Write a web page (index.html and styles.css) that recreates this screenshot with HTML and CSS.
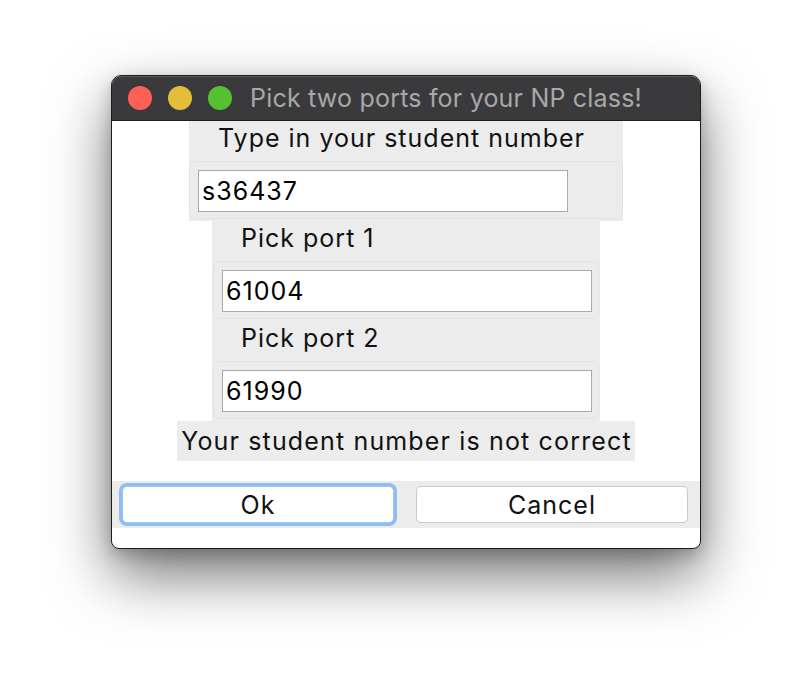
FILE: index.html
```html
<!DOCTYPE html>
<html>
<head>
<meta charset="utf-8">
<link rel="stylesheet" href="styles.css">
</head>
<body>
<div class="window">
  <div class="titlebar">
    <div class="lights">
      <span class="light red"></span>
      <span class="light yellow"></span>
      <span class="light green"></span>
    </div>
    <div class="title">Pick two ports for your NP class!</div>
  </div>
  <div class="content">
    <div class="frame frame-student">
      <div class="label">Type in your student number</div>
      <div class="group group-student"><div class="field">s36437</div></div>
    </div>
    <div class="frame frame-ports">
      <div class="label">Pick port 1</div>
      <div class="group"><div class="field">61004</div></div>
      <div class="label label-second">Pick port 2</div>
      <div class="group"><div class="field">61990</div></div>
    </div>
    <div class="error">Your student number is not correct</div>
    <div class="buttons">
      <div class="btn-wrap focus"><div class="btn">Ok</div></div>
      <div class="btn-wrap"><div class="btn">Cancel</div></div>
    </div>
  </div>
</div>
</body>
</html>
```
FILE: styles.css
```css
html, body {
  margin: 0;
  padding: 0;
  background: #ffffff;
}
html {
  height: 100%;
}
body {
  min-height: 100%;
  box-sizing: border-box;
  padding: 75px 0 0 111px;
  font-family: Inter, "Liberation Sans", sans-serif;
  font-size: 25px;
  letter-spacing: 1px;
  color: #111;
}
.window {
  width: 588px;
  border: 1px solid #1c1c1c;
  border-radius: 10px 10px 8px 8px;
  background: #fff;
  box-shadow: 0 26px 60px rgba(0,0,0,0.55), 0 6px 16px rgba(0,0,0,0.2);
  overflow: hidden;
}
.titlebar {
  height: 44px;
  background: #3a3a3c;
  border-bottom: 1px solid #1d1d1d;
  box-shadow: inset 0 1px 0 #5a5a5c;
  display: flex;
  align-items: center;
}
.lights {
  display: flex;
  gap: 16px;
  padding-left: 16px;
}
.light {
  width: 24px;
  height: 24px;
  border-radius: 50%;
  display: block;
}
.red { background: #fe5f57; }
.yellow { background: #e5bd3b; }
.green { background: #53c131; }
.title {
  margin-left: 18px;
  color: #a8a8a8;
  font-size: 25px;
  letter-spacing: 0.2px;
}
.content {
  display: flex;
  flex-direction: column;
  align-items: center;
  padding-bottom: 20px;
}
.frame {
  background: #ececec;
  display: flex;
  flex-direction: column;
}
.frame-student {
  width: 434px;
  height: 100px;
}
.frame-ports {
  width: 388px;
  height: 200px;
}
.label {
  height: 40px;
  line-height: 35px;
  padding-left: 29px;
  box-sizing: border-box;
}
.label-second {
  height: 42px;
  line-height: 38px;
}
.group {
  height: 58px;
  box-sizing: border-box;
  border: 1px solid #e2e2e2;
  border-radius: 7px;
  padding: 8px 8px 0 8px;
  margin: 0 1px;
}
.group-student {
  margin: 0;
}
.field {
  width: 370px;
  height: 42px;
  box-sizing: border-box;
  border: 1px solid #a9a9a9;
  background: #fff;
  padding-left: 3px;
  line-height: 41px;
  color: #000;
}
.error {
  background: #ececec;
  height: 40px;
  line-height: 40px;
  padding: 0 3px 0 4px;
  letter-spacing: 1.15px;
  color: #111;
}
.buttons {
  margin-top: 20px;
  align-self: stretch;
  height: 47px;
  background: #ececec;
  display: flex;
  align-items: center;
  padding: 0 9px 0 7px;
  gap: 16px;
}
.btn-wrap {
  flex: 1;
  padding: 3px;
  border-radius: 8px;
}
.btn-wrap.focus {
  background: #8fbdf2;
}
.btn {
  height: 37px;
  box-sizing: border-box;
  background: #fff;
  border: 1px solid #c9c9c9;
  border-radius: 5px;
  text-align: center;
  line-height: 36px;
  color: #111;
}
.focus .btn {
  border-color: #9ec6f3;
}
```
